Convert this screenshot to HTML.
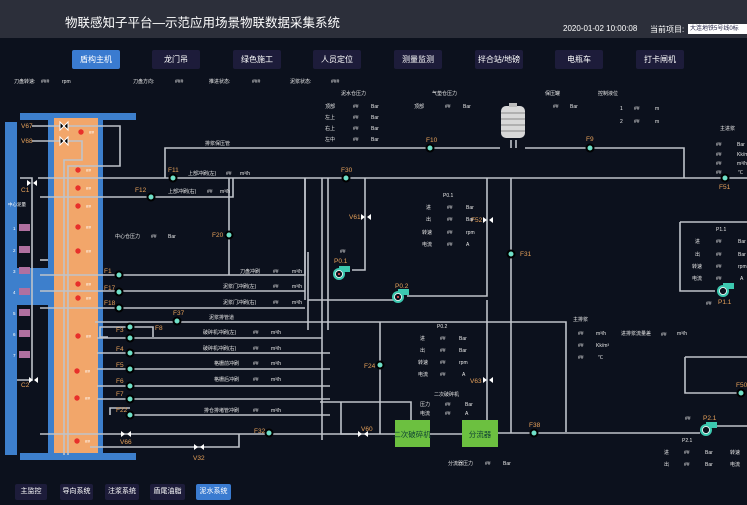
<!DOCTYPE html>
<html><head><meta charset="utf-8"><style>
*{margin:0;padding:0;box-sizing:border-box}
body{width:747px;height:505px;background:#0c111d;overflow:hidden;position:relative;font-family:"Liberation Sans","Noto Sans CJK SC",sans-serif;color:#e6e6e6}
.hd{position:absolute;left:0;top:0;width:747px;height:38px;background:#2c2f3a}
.t{position:absolute;left:65px;top:12px;font-size:12.5px;color:#fff}
.dt{position:absolute;left:563px;top:24px;font-size:8px;color:#fff}
.pj{position:absolute;left:650px;top:24px;font-size:8px;color:#fff}
.ip{position:absolute;left:688px;top:24px;width:59px;height:10px;background:#fff;color:#224;font-size:6px;line-height:10px;padding-left:2px;white-space:nowrap;overflow:hidden}
.nb{position:absolute;top:50px;height:19px;width:48px;background:#1d1c3a;color:#fff;font-size:8px;text-align:center;line-height:19px;border-radius:2px}
.nb.a{background:#3a7bd0}
.bb{position:absolute;top:484px;height:16px;background:#1d1c3a;color:#fff;font-size:7px;text-align:center;line-height:16px;border-radius:2px}
.bb.a{background:#3a7bd0}
svg{position:absolute;left:0;top:0}
</style></head><body>
<div class="hd"></div>
<div class="t">物联感知子平台—示范应用场景物联数据采集系统</div>
<div class="dt">2020-01-02 10:00:08</div>
<div class="pj">当前项目:</div>
<div class="ip">大连地铁5号线0标</div>
<div class="nb a" style="left:72px">盾构主机</div>
<div class="nb" style="left:152px">龙门吊</div>
<div class="nb" style="left:233px">绿色施工</div>
<div class="nb" style="left:313px">人员定位</div>
<div class="nb" style="left:394px">测量监测</div>
<div class="nb" style="left:475px">拌合站/地磅</div>
<div class="nb" style="left:555px">电瓶车</div>
<div class="nb" style="left:636px">打卡闸机</div>
<div class="bb" style="left:15px;width:32px">主监控</div>
<div class="bb" style="left:60px;width:33px">导向系统</div>
<div class="bb" style="left:105px;width:34px">注浆系统</div>
<div class="bb" style="left:150px;width:35px">盾尾油脂</div>
<div class="bb a" style="left:196px;width:35px">泥水系统</div>
<svg width="747" height="505" viewBox="0 0 747 505" font-family="Liberation Sans, Noto Sans CJK SC, sans-serif">
<rect x="20" y="113" width="116" height="7" fill="#3d7fcc"/>
<rect x="5" y="122" width="12" height="333" fill="#3d7fcc"/>
<rect x="17" y="268" width="32" height="37" fill="#3d7fcc"/>
<rect x="48" y="118" width="55" height="337" fill="#3d7fcc"/>
<rect x="54" y="118" width="44" height="337" fill="#f2a66a"/>
<rect x="20" y="453" width="116" height="7" fill="#3d7fcc"/>
<g stroke="#bfc3ca" stroke-width="1.6" fill="none">
<path d="M32 126H120V166H68V455"/>
<path d="M32 141H82V160H64V455"/>
<path d="M20 178H32V380H17"/>
<path d="M38 178H747"/>
<path d="M165 178V148H500"/>
<path d="M525 148H684V178"/>
<path d="M40 197H233V178"/>
<path d="M229 178V275"/>
<path d="M40 275H305V178"/>
<path d="M40 291H305"/>
<path d="M40 308H305"/>
<path d="M305 178V300"/>
<path d="M308 252V330"/>
<path d="M308 300H398"/>
<path d="M322 178V440"/>
<path d="M328 178V330"/>
<path d="M40 260H48"/>
<path d="M95 322H566V432"/>
<path d="M108 337H100V327H153V337"/>
<path d="M97 338H322"/>
<path d="M97 353H330"/>
<path d="M97 369H330"/>
<path d="M97 386H330"/>
<path d="M97 399H330"/>
<path d="M110 415V408H130"/>
<path d="M130 415H330"/>
<path d="M40 434H361"/>
<path d="M90 447H239V434"/>
<path d="M365 178V270H352"/>
<path d="M407 296H487V178"/>
<path d="M511 178V433"/>
<path d="M380 322V434"/>
<path d="M320 402H411V420"/>
<path d="M341 402V434H395"/>
<path d="M430 434H462"/>
<path d="M487 300V420"/>
<path d="M498 433H700"/>
<path d="M710 426H747"/>
<path d="M685 357V393H741"/>
<path d="M685 357H747"/>
<path d="M680 222V291H715"/>
<path d="M680 222H747"/>
<path d="M511 140V148M516 140V148"/>
</g>
<rect x="501" y="106" width="24" height="32" rx="5" fill="#d8d8d8"/>
<g stroke="#888" stroke-width="1"><path d="M501 113H525M501 119H525M501 125H525M501 131H525"/></g>
<rect x="509" y="103" width="8" height="4" fill="#bbb"/>
<g fill="#000" stroke="#fff" stroke-width="1">
<path d="M60 122L68 130V122L60 130Z"/><path d="M60 137L68 145V137L60 145Z"/>
</g>
<g fill="#fff">
<path d="M27 180l4 3-4 3zM37 180l-4 3 4 3z"/>
<path d="M29 377l4 3-4 3zM38 377l-4 3 4 3z"/>
<path d="M361 214l4 3-4 3zM371 214l-4 3 4 3z"/>
<path d="M483 217l4 3-4 3zM493 217l-4 3 4 3z"/>
<path d="M483 377l4 3-4 3zM493 377l-4 3 4 3z"/>
<path d="M121 431l4 3-4 3zM131 431l-4 3 4 3z"/>
<path d="M194 444l4 3-4 3zM204 444l-4 3 4 3z"/>
<path d="M358 431l4 3-4 3zM368 431l-4 3 4 3z"/>
</g>
<g fill="#6fe0c8" stroke="#000" stroke-width="2">
<circle cx="430" cy="148" r="3.5"/><circle cx="590" cy="148" r="3.5"/>
<circle cx="173" cy="178" r="3.5"/><circle cx="346" cy="178" r="3.5"/><circle cx="725" cy="178" r="3.5"/>
<circle cx="151" cy="197" r="3.5"/><circle cx="229" cy="235" r="3.5"/><circle cx="511" cy="254" r="3.5"/>
<circle cx="119" cy="275" r="3.5"/><circle cx="119" cy="292" r="3.5"/><circle cx="119" cy="308" r="3.5"/>
<circle cx="177" cy="321" r="3.5"/><circle cx="130" cy="327" r="3.5"/><circle cx="130" cy="338" r="3.5"/>
<circle cx="130" cy="353" r="3.5"/><circle cx="130" cy="369" r="3.5"/><circle cx="130" cy="386" r="3.5"/>
<circle cx="130" cy="399" r="3.5"/><circle cx="130" cy="415" r="3.5"/><circle cx="380" cy="365" r="3.5"/>
<circle cx="269" cy="433" r="3.5"/><circle cx="534" cy="433" r="3.5"/><circle cx="741" cy="393" r="3.5"/>
</g>
<g>
<rect x="339" y="266" width="11" height="6" fill="#3cc8b0"/><circle cx="339" cy="274" r="6" fill="#3cc8b0"/><circle cx="339" cy="274" r="3.5" fill="#0c111d" stroke="#fff" stroke-width="0.8"/><circle cx="339" cy="274" r="1" fill="#f55"/>
<rect x="398" y="289" width="11" height="6" fill="#3cc8b0"/><circle cx="398" cy="297" r="6" fill="#3cc8b0"/><circle cx="398" cy="297" r="3.5" fill="#0c111d" stroke="#fff" stroke-width="0.8"/><circle cx="398" cy="297" r="1" fill="#f55"/>
<rect x="723" y="283" width="11" height="6" fill="#3cc8b0"/><circle cx="723" cy="291" r="6" fill="#3cc8b0"/><circle cx="723" cy="291" r="3.5" fill="#0c111d" stroke="#fff" stroke-width="0.8"/>
<rect x="706" y="422" width="11" height="6" fill="#3cc8b0"/><circle cx="706" cy="430" r="6" fill="#3cc8b0"/><circle cx="706" cy="430" r="3.5" fill="#0c111d" stroke="#fff" stroke-width="0.8"/>
</g>
<rect x="395" y="420" width="35" height="27" fill="#6cc040"/>
<rect x="462" y="420" width="36" height="27" fill="#6cc040"/>
<text x="412" y="437" font-size="7.5" fill="#143" text-anchor="middle">二次破碎机</text>
<text x="480" y="437" font-size="7.5" fill="#143" text-anchor="middle">分流器</text>
<g fill="#e8302a"><circle cx="81" cy="132" r="2.7"/><circle cx="78" cy="170" r="2.7"/><circle cx="78" cy="188" r="2.7"/><circle cx="78" cy="206" r="2.7"/><circle cx="78" cy="227" r="2.7"/><circle cx="78" cy="251" r="2.7"/><circle cx="78" cy="284" r="2.7"/><circle cx="78" cy="298" r="2.7"/><circle cx="78" cy="336" r="2.7"/><circle cx="77" cy="371" r="2.7"/><circle cx="77" cy="398" r="2.7"/><circle cx="77" cy="441" r="2.7"/></g>
<g fill="#fff" font-size="4.5"><text x="89" y="134">##</text><text x="86" y="172">##</text><text x="86" y="190">##</text><text x="86" y="208">##</text><text x="86" y="229">##</text><text x="86" y="253">##</text><text x="86" y="286">##</text><text x="86" y="300">##</text><text x="86" y="338">##</text><text x="85" y="373">##</text><text x="85" y="400">##</text><text x="85" y="443">##</text></g>
<g fill="#b070a0"><rect x="19" y="224" width="11" height="7"/><rect x="19" y="246" width="11" height="7"/><rect x="19" y="267" width="11" height="7"/><rect x="19" y="288" width="11" height="7"/><rect x="19" y="309" width="11" height="7"/><rect x="19" y="330" width="11" height="7"/><rect x="19" y="351" width="11" height="7"/></g>
<g fill="#fff" font-size="4.5"><text x="13" y="230">1</text><text x="13" y="252">2</text><text x="13" y="273">3</text><text x="13" y="294">4</text><text x="13" y="315">5</text><text x="13" y="336">6</text><text x="13" y="357">7</text><text x="8" y="206">中心泥量</text></g>
<g fill="#e8a25a" font-size="6.5">
<text x="21" y="128">V67</text><text x="21" y="143">V68</text><text x="21" y="192">C1</text><text x="21" y="387">C2</text>
<text x="426" y="142">F10</text><text x="586" y="141">F9</text><text x="168" y="172">F11</text><text x="341" y="172">F30</text><text x="719" y="189">F51</text>
<text x="135" y="192">F12</text><text x="212" y="237">F20</text><text x="520" y="256">F31</text><text x="349" y="219">V61</text><text x="471" y="222">F52</text>
<text x="104" y="273">F1</text><text x="104" y="290">F17</text><text x="104" y="305">F18</text><text x="173" y="315">F37</text><text x="116" y="332">F3</text><text x="155" y="330">F8</text>
<text x="116" y="351">F4</text><text x="116" y="367">F5</text><text x="116" y="383">F6</text><text x="116" y="396">F7</text><text x="116" y="412">F22</text>
<text x="334" y="263">P0.1</text><text x="395" y="288">P0.2</text><text x="364" y="368">F24</text><text x="470" y="383">V63</text><text x="361" y="431">V60</text>
<text x="254" y="433">F32</text><text x="529" y="427">F38</text><text x="120" y="444">V66</text><text x="193" y="460">V32</text>
<text x="718" y="304">P1.1</text><text x="703" y="420">P2.1</text><text x="736" y="387">F50</text>
</g>
<g fill="#e8e8e8" font-size="5">
<text x="14" y="83">刀盘转速:</text><text x="41" y="83">###</text><text x="62" y="83">rpm</text>
<text x="133" y="83">刀盘方向:</text><text x="175" y="83">###</text><text x="209" y="83">推进状态:</text><text x="252" y="83">###</text><text x="290" y="83">泥浆状态:</text><text x="331" y="83">###</text>
<text x="341" y="95">泥水仓压力</text><text x="432" y="95">气垫仓压力</text><text x="545" y="95">保压罐</text><text x="598" y="95">控制液位</text>
<text x="325" y="108">顶部</text><text x="353" y="108">##</text><text x="371" y="108">Bar</text><text x="414" y="108">顶部</text><text x="445" y="108">##</text><text x="463" y="108">Bar</text>
<text x="325" y="119">左上</text><text x="353" y="119">##</text><text x="371" y="119">Bar</text>
<text x="325" y="130">右上</text><text x="353" y="130">##</text><text x="371" y="130">Bar</text>
<text x="325" y="141">左中</text><text x="353" y="141">##</text><text x="371" y="141">Bar</text>
<text x="553" y="108">##</text><text x="570" y="108">Bar</text>
<text x="620" y="110">1</text><text x="634" y="110">##</text><text x="655" y="110">m</text><text x="620" y="123">2</text><text x="634" y="123">##</text><text x="655" y="123">m</text>
<text x="720" y="130">主进浆</text>
<text x="716" y="146">##</text><text x="737" y="146">Bar</text><text x="716" y="156">##</text><text x="737" y="156">Kk/m³</text><text x="716" y="165">##</text><text x="737" y="165">m³/h</text><text x="716" y="174">##</text><text x="738" y="174">℃</text>
<text x="205" y="145">排浆保压管</text>
<text x="188" y="175">上部冲刷(左)</text><text x="226" y="175">##</text><text x="240" y="175">m³/h</text>
<text x="168" y="193">上部冲刷(右)</text><text x="207" y="193">##</text><text x="220" y="193">m³/h</text>
<text x="115" y="238">中心仓压力</text><text x="151" y="238">##</text><text x="168" y="238">Bar</text>
<text x="240" y="273">刀盘冲刷</text><text x="273" y="273">##</text><text x="292" y="273">m³/h</text>
<text x="223" y="288">泥浆门冲刷(左)</text><text x="273" y="288">##</text><text x="292" y="288">m³/h</text>
<text x="223" y="304">泥浆门冲刷(右)</text><text x="273" y="304">##</text><text x="292" y="304">m³/h</text>
<text x="209" y="319">泥浆排管道</text>
<text x="203" y="334">破碎机冲刷(左)</text><text x="253" y="334">##</text><text x="271" y="334">m³/h</text>
<text x="203" y="350">破碎机冲刷(右)</text><text x="253" y="350">##</text><text x="271" y="350">m³/h</text>
<text x="214" y="365">格栅前冲刷</text><text x="253" y="365">##</text><text x="271" y="365">m³/h</text>
<text x="214" y="381">格栅后冲刷</text><text x="253" y="381">##</text><text x="271" y="381">m³/h</text>
<text x="204" y="412">排仓排堵管冲刷</text><text x="253" y="412">##</text><text x="271" y="412">m³/h</text>
<text x="340" y="253">##</text>
<text x="443" y="197">P0.1</text><text x="426" y="209">进</text><text x="447" y="209">##</text><text x="466" y="209">Bar</text>
<text x="426" y="221">出</text><text x="447" y="221">##</text><text x="466" y="221">Bar</text>
<text x="422" y="234">转速</text><text x="447" y="234">##</text><text x="466" y="234">rpm</text>
<text x="422" y="246">电流</text><text x="447" y="246">##</text><text x="466" y="246">A</text>
<text x="437" y="328">P0.2</text><text x="420" y="340">进</text><text x="440" y="340">##</text><text x="459" y="340">Bar</text>
<text x="420" y="352">出</text><text x="440" y="352">##</text><text x="459" y="352">Bar</text>
<text x="418" y="364">转速</text><text x="440" y="364">##</text><text x="459" y="364">rpm</text>
<text x="418" y="376">电流</text><text x="440" y="376">##</text><text x="462" y="376">A</text>
<text x="434" y="396">二次破碎机</text><text x="420" y="406">压力</text><text x="445" y="406">##</text><text x="465" y="406">Bar</text>
<text x="420" y="415">电流</text><text x="445" y="415">##</text><text x="465" y="415">A</text>
<text x="448" y="465">分流器压力</text><text x="485" y="465">##</text><text x="503" y="465">Bar</text>
<text x="573" y="321">主排浆</text><text x="578" y="335">##</text><text x="596" y="335">m³/h</text><text x="621" y="335">进排浆流量差</text><text x="661" y="336">##</text><text x="677" y="335">m³/h</text>
<text x="578" y="347">##</text><text x="596" y="347">Kk/m³</text><text x="578" y="359">##</text><text x="598" y="359">℃</text>
<text x="716" y="231">P1.1</text><text x="695" y="243">进</text><text x="716" y="243">##</text><text x="738" y="243">Bar</text>
<text x="695" y="256">出</text><text x="716" y="256">##</text><text x="738" y="256">Bar</text>
<text x="692" y="268">转速</text><text x="716" y="268">##</text><text x="738" y="268">rpm</text>
<text x="692" y="280">电流</text><text x="716" y="280">##</text><text x="740" y="280">A</text>
<text x="706" y="305">##</text><text x="685" y="420">##</text>
<text x="682" y="442">P2.1</text><text x="664" y="454">进</text><text x="684" y="454">##</text><text x="705" y="454">Bar</text><text x="730" y="454">转速</text>
<text x="664" y="466">出</text><text x="684" y="466">##</text><text x="705" y="466">Bar</text><text x="730" y="466">电流</text>
</g>
</svg>
</body></html>
